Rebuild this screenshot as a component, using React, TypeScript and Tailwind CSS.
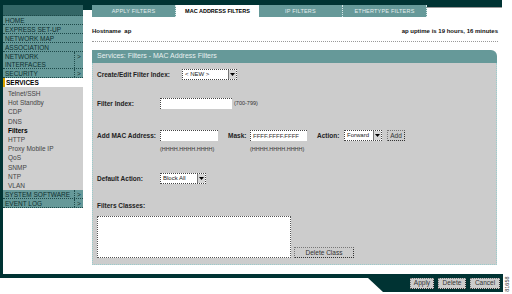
import React from "react";

type MenuItem = { lines: string[]; arrow?: boolean; tall?: boolean };

const topItems: MenuItem[] = [
  { lines: ["HOME"] },
  { lines: ["EXPRESS SET-UP"] },
  { lines: ["NETWORK MAP"] },
  { lines: ["ASSOCIATION"] },
  { lines: ["NETWORK", "INTERFACES"], arrow: true, tall: true },
  { lines: ["SECURITY"], arrow: true },
];

const bottomItems: MenuItem[] = [
  { lines: ["SYSTEM SOFTWARE"], arrow: true },
  { lines: ["EVENT LOG"], arrow: true },
];

const subItems = [
  "Telnet/SSH",
  "Hot Standby",
  "CDP",
  "DNS",
  "Filters",
  "HTTP",
  "Proxy Mobile IP",
  "QoS",
  "SNMP",
  "NTP",
  "VLAN",
];

const tabs = ["APPLY FILTERS", "MAC ADDRESS FILTERS", "IP FILTERS", "ETHERTYPE FILTERS"];

function MenuRow({ item }: { item: MenuItem }) {
  return (
    <div
      className={`flex border-b border-dotted border-[#1e4a4a] bg-[#669999] text-[6.5px] leading-[8px] text-[#0d2f2f] ${
        item.tall ? "h-[17px]" : "h-[9px]"
      }`}
    >
      <div className="flex flex-1 flex-col pl-[2px] pt-[0.5px]">
        {item.lines.map((l) => (
          <span key={l}>{l}</span>
        ))}
      </div>
      {item.arrow && (
        <div className="w-[9px] border-l border-dotted border-[#1e4a4a] pl-[2px] pt-[0.5px]">&gt;</div>
      )}
    </div>
  );
}

function Select({ value, className }: { value: string; className: string }) {
  return (
    <div className={`flex h-[11px] border border-dotted border-[#444] bg-white font-normal ${className}`}>
      <span className="flex-1 pl-[2px] text-[6px] leading-[9px] text-[#222]">{value}</span>
      <span className="flex w-[8px] items-center justify-center border-l border-[#777] bg-[#d6d6d6]">
        <svg width="5" height="3" viewBox="0 0 5 3">
          <path d="M0 0h5L2.5 3z" fill="#000" />
        </svg>
      </span>
    </div>
  );
}

function Input({ className, value }: { className: string; value?: string }) {
  return (
    <div
      className={`h-[11px] border-t border-l border-dotted border-[#444] bg-white pl-[2px] text-[6px] font-normal leading-[10px] text-[#333] ${className}`}
    >
      {value}
    </div>
  );
}

function Button({ label, className }: { label: string; className: string }) {
  return (
    <div
      className={`flex h-[11px] items-center justify-center border border-dotted border-[#777] border-r-[#333] border-b-[#333] bg-[#cccccc] text-[6.5px] font-normal text-[#333] ${className}`}
    >
      {label}
    </div>
  );
}

export default function App() {
  return (
    <div className="h-[294px] w-[512px] overflow-hidden bg-white font-['Liberation_Sans',Arial,sans-serif]">
      <div className="flex h-[274px]">
        {/* sidebar */}
        <aside className="flex w-[83px] flex-col border-l-[3px] border-[#003333]">
          <div className="h-[5px] bg-[#003333]" />
          <div className="h-[11px] border-b border-dotted border-[#1e4a4a] bg-[#336666]" />
          {topItems.map((it) => (
            <MenuRow key={it.lines.join()} item={it} />
          ))}
          <div className="flex h-[9px] border-l-2 border-[#d9a400] bg-white pl-[1px] text-[6.5px] font-bold leading-[9px] text-black">
            SERVICES
          </div>
          <div className="flex flex-col bg-[#cfcfcf] pt-[2px]">
            {subItems.map((s) => (
              <span
                key={s}
                className={`h-[9.2px] pl-[5px] text-[6.5px] leading-[9px] ${
                  s === "Filters" ? "font-bold text-black" : "text-[#444]"
                }`}
              >
                {s}
              </span>
            ))}
          </div>
          {bottomItems.map((it) => (
            <MenuRow key={it.lines.join()} item={it} />
          ))}
        </aside>

        {/* gap */}
        <div className="flex w-[9px] flex-col">
          <div className="h-[10px] bg-[#003333]" />
        </div>

        {/* main */}
        <main className="flex flex-1 flex-col">
          <div className="h-[5px] w-[410px] bg-[#003333]" />
          <div className="flex h-[12px]">
            {tabs.map((t, i) =>
              i === 1 ? (
                <div
                  key={t}
                  className="flex w-[83px] items-center justify-center bg-white text-[5.5px] font-bold text-black"
                >
                  {t}
                </div>
              ) : (
                <div
                  key={t}
                  className="flex w-[84px] items-center justify-center border-r border-dotted border-[#d8e8e8] bg-[#669999] text-[5.5px] tracking-[0.2px] text-[#e4eeee]"
                >
                  {t}
                </div>
              )
            )}
            <div className="flex w-[75px] flex-col">
              <div className="h-[2px] bg-[#003333]" />
              <div className="h-px bg-[#999]" />
            </div>
          </div>

          <div className="mt-[10px] flex w-[406px] items-center justify-between text-[6px] font-bold text-[#111]">
            <span>Hostname&nbsp; ap</span>
            <span>ap uptime is 19 hours, 16 minutes</span>
          </div>
          <div className="mt-[5px] w-[406px] border-t border-dotted border-[#999]" />

          {/* panel */}
          <section className="mt-[8px] flex w-[405px] flex-col">
            <div className="flex h-[13px] items-center rounded-tr-[6px] bg-[#669999] pl-[5px] text-[7px] text-[#e8f0f0]">
              Services: Filters - MAC Address Filters
            </div>
            <div className="flex h-[202px] flex-col border-x border-b border-dotted border-[#99cccc] bg-[#cccccc] px-[4px] text-[6.5px] font-bold text-[#222]">
              <div className="mt-[6px] flex h-[11px] items-center">
                <span className="w-[85px]">Create/Edit Filter Index:</span>
                <Select value="< NEW >" className="w-[55px]" />
              </div>

              <div className="mt-[18px] flex h-[11px] items-center">
                <span className="w-[63px]">Filter Index:</span>
                <Input className="w-[72px]" />
                <span className="ml-[2px] text-[5.5px] font-normal text-[#333]">(700-799)</span>
              </div>

              <div className="mt-[21px] flex h-[11px] items-center">
                <span className="w-[63px]">Add MAC Address:</span>
                <Input className="w-[58px]" />
                <span className="ml-[10px] w-[22px]">Mask:</span>
                <Input className="w-[57px]" value="FFFF.FFFF.FFFF" />
                <span className="ml-[10px] w-[27px]">Action:</span>
                <Select value="Forward" className="w-[38px]" />
                <Button label="Add" className="ml-[5px] w-[18px]" />
              </div>
              <div className="mt-[4px] flex h-[8px] items-center text-[5.5px] font-normal text-[#333]">
                <span className="ml-[63px] w-[90px]">(HHHH.HHHH.HHHH)</span>
                <span>(HHHH.HHHH.HHHH)</span>
              </div>

              <div className="mt-[20px] flex h-[11px] items-center">
                <span className="w-[63px]">Default Action:</span>
                <Select value="Block All" className="w-[46px]" />
              </div>

              <div className="mt-[18px] flex h-[8px] items-center">Filters Classes:</div>

              <div className="mt-[6px] flex items-end">
                <div className="h-[42px] w-[194px] border border-dotted border-[#555] bg-white" />
                <Button label="Delete Class" className="ml-[3px] w-[60px]" />
              </div>
            </div>
          </section>
        </main>
      </div>

      {/* bottom bar */}
      <div className="flex h-[20px] items-start">
        <div className="h-[4px] w-[368px] bg-[#003333]" />
        <svg width="15" height="18" viewBox="0 0 15 18" className="block">
          <polygon points="0,0 15,0 15,18 0,4" fill="#003333" />
        </svg>
        <div className="flex h-[18px] w-[120px] items-center justify-end gap-[4px] bg-[#003333] pr-[3px]">
          <Button label="Apply" className="w-[24px]" />
          <Button label="Delete" className="w-[28px]" />
          <Button label="Cancel" className="w-[30px]" />
        </div>
        <div className="relative h-[20px] w-[9px]">
          <span className="absolute left-[-4px] top-[6px] -rotate-90 text-[5.5px] text-[#333]">81658</span>
        </div>
      </div>
    </div>
  );
}
